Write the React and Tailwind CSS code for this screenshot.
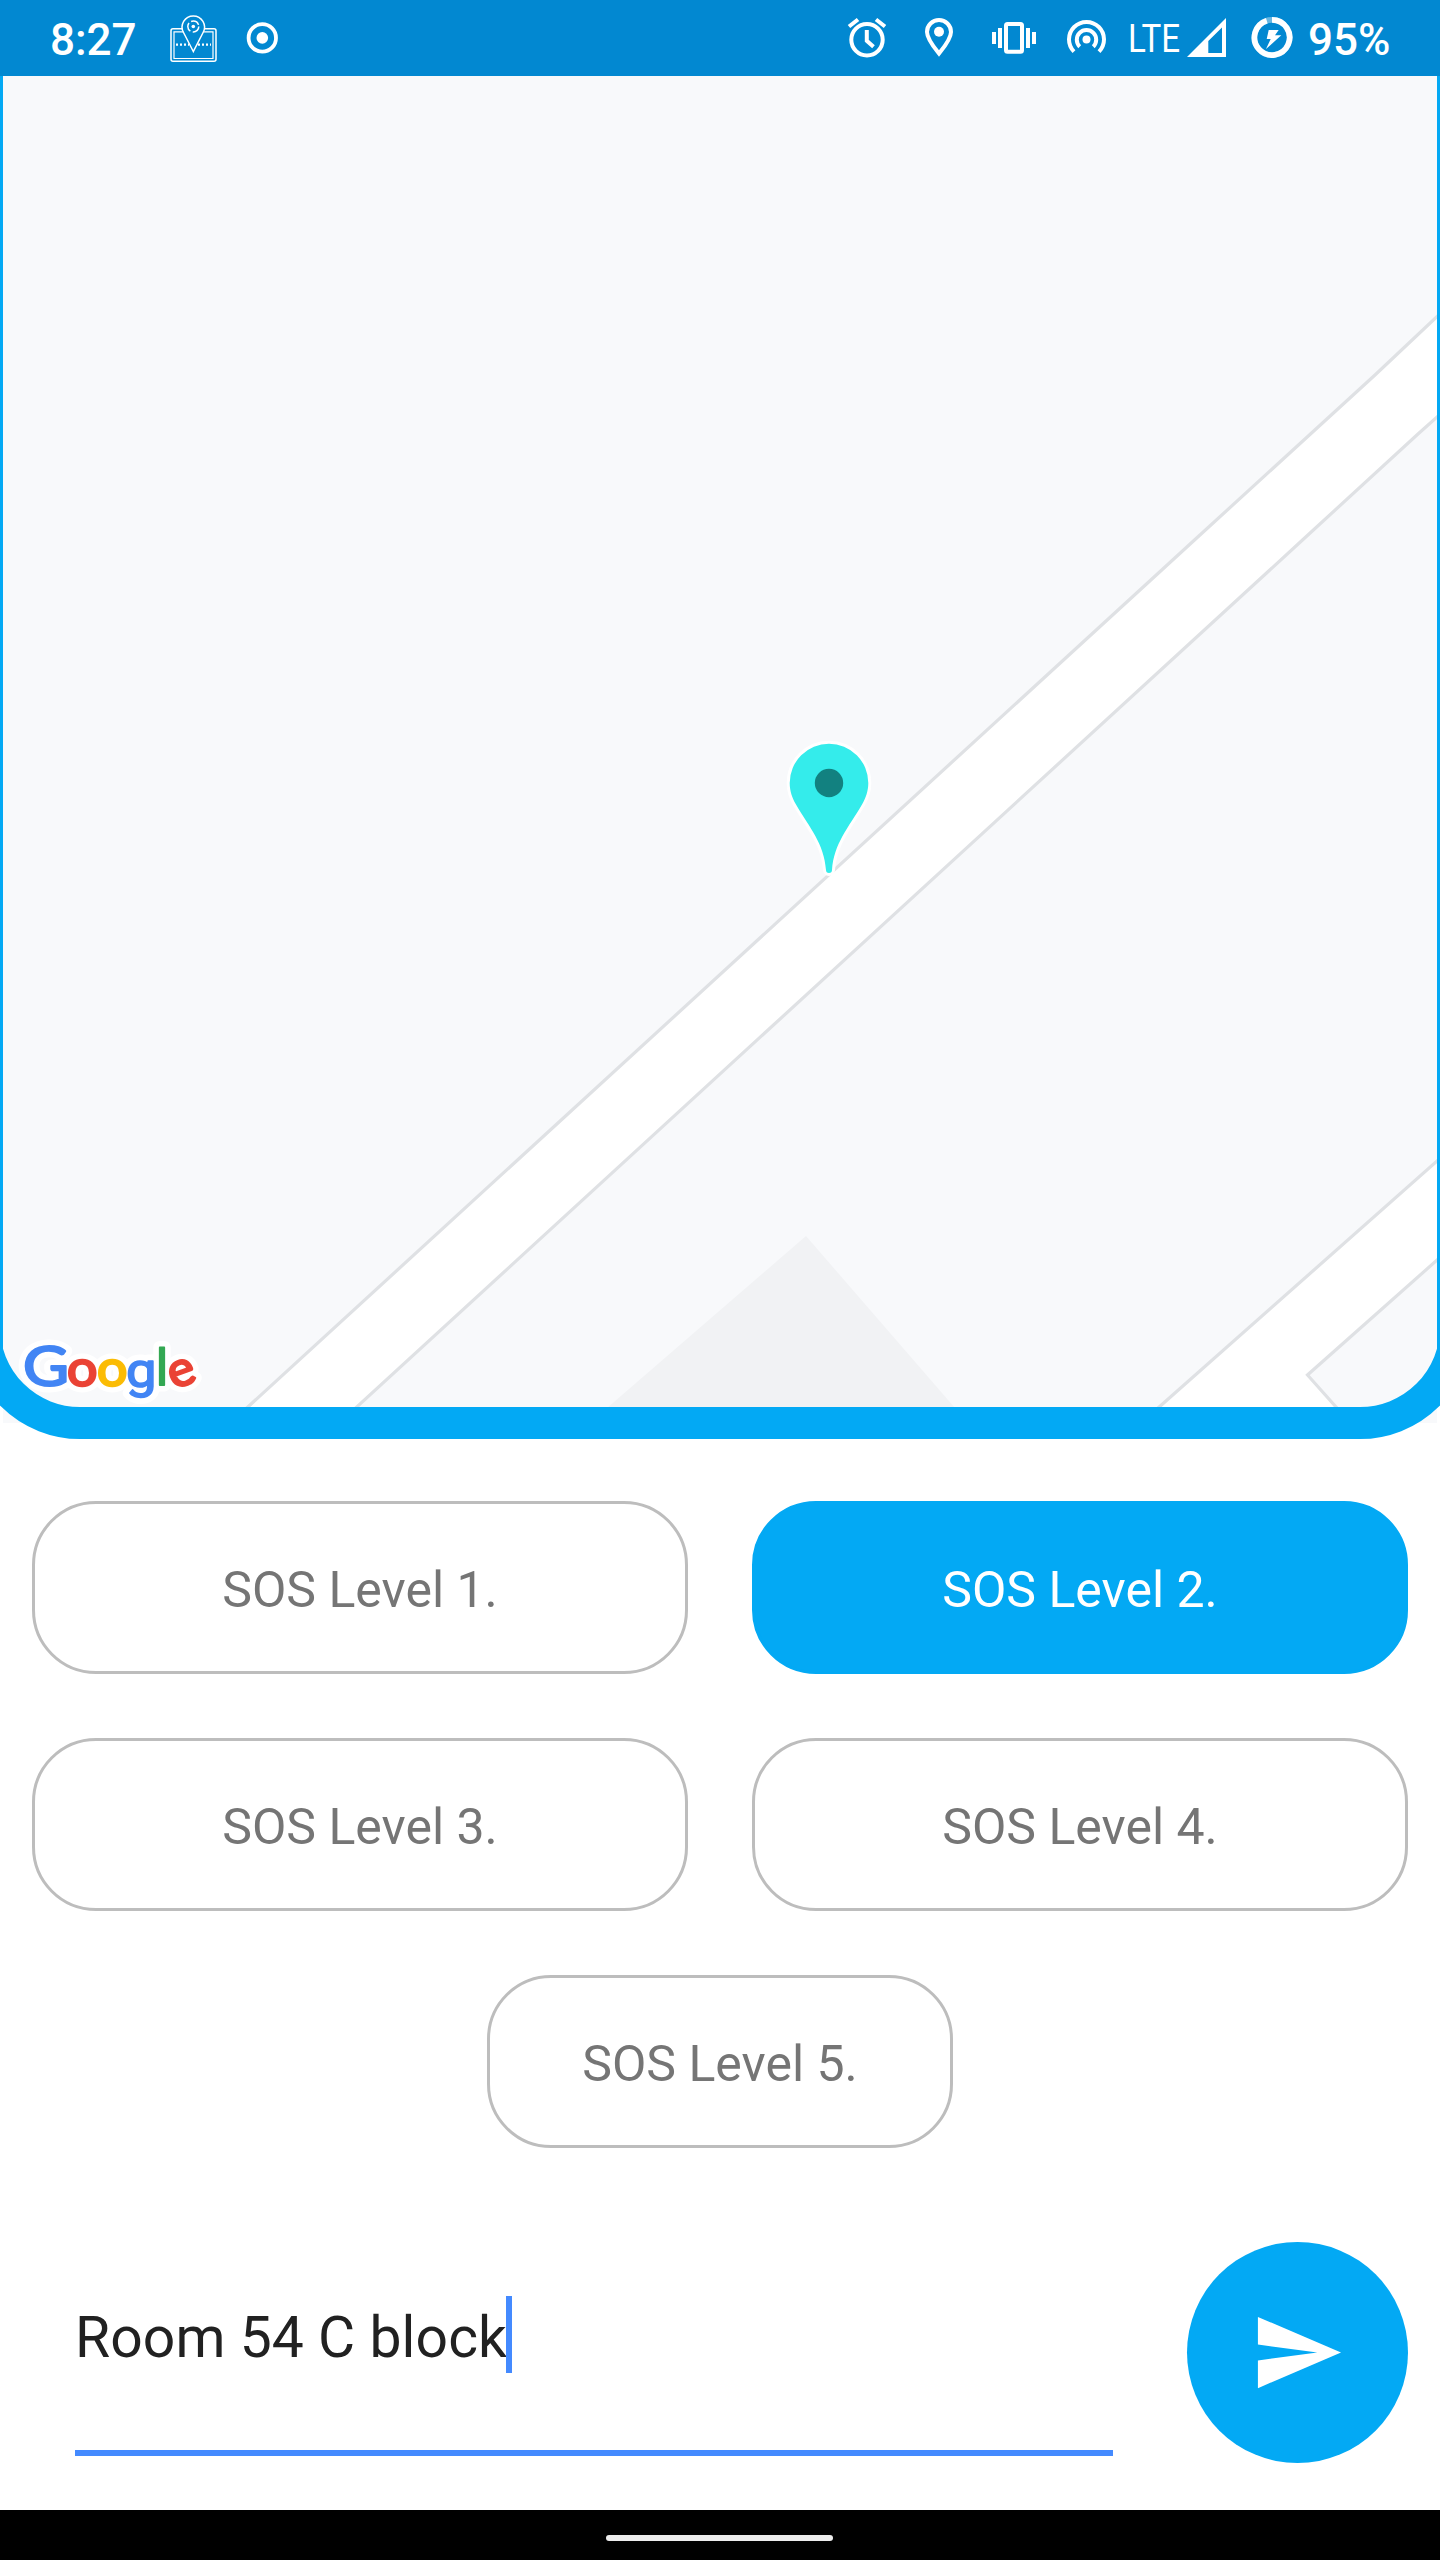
import React from "react";

function MapAppIcon() {
  return (
    <svg className="ml-[31px] h-[50px] w-[50px]" viewBox="168 13 50 50" fill="none" stroke="#fff" strokeWidth="1.5">
      <path d="M182.5 28.7h-9.5a2 2 0 0 0-2 2v28.5a2 2 0 0 0 2 2h41a2 2 0 0 0 2-2V30.700a2 2 0 0 0-2-2h-9.500" />
      <path d="M183.500 31.800h-9.500v26.700h39V31.800h-9.500" strokeWidth="1.200" />
      <path d="M193.300 51.500 183.500 32.500a11.200 11.200 0 1 1 19.600 0Z" />
      <circle cx="193.300" cy="26.500" r="5.500" strokeDasharray="9 2.500" />
      <circle cx="193.300" cy="26.500" r="1.800" fill="#fff" stroke="none" />
      <path d="M176 44.700h13M198 44.700h13" strokeWidth="2.200" strokeDasharray="2 2" />
    </svg>
  );
}

function RecordIcon() {
  return (
    <svg className="ml-[27px] h-[34px] w-[34px]" viewBox="245 21.500 34 34" fill="none">
      <circle cx="262.300" cy="38.400" r="13.700" stroke="#fff" strokeWidth="3.800" />
      <circle cx="262.300" cy="38.400" r="5.800" fill="#fff" />
    </svg>
  );
}

function StatusIcons() {
  return (
    <>
      <svg className="h-[44px] w-[42px]" viewBox="846 16 42 44" fill="none" stroke="#fff" strokeWidth="4">
        <circle cx="867" cy="39.700" r="15.700" />
        <path d="M849 26.500 858 19.500M885 26.500 876 19.500M866.800 30v10.800l6.700 5.900" />
      </svg>
      <svg className="ml-[34px] h-[44px] w-[34px]" viewBox="922 16 34 44" fill="none">
        <path d="M939 53.600C934.500 48 927 39 927 32a12 12 0 0 1 24 0c0 7-7.500 16-12 21.600Z" stroke="#fff" strokeWidth="4" />
        <circle cx="939" cy="31.700" r="5" fill="#fff" />
      </svg>
      <svg className="ml-[34px] h-[44px] w-[48px]" viewBox="990 16 48 44" fill="none">
        <rect x="1006" y="24" width="16" height="27.700" rx="1.500" stroke="#fff" strokeWidth="4" />
        <path d="M992 32h4v12h-4zM998 28h4v20h-4zM1026 28h4v20h-4zM1032 32h4v12h-4z" fill="#fff" />
      </svg>
      <svg className="ml-[26px] h-[44px] w-[44px]" viewBox="1064 16 44 44" fill="none" stroke="#fff" strokeWidth="4">
        <circle cx="1086.500" cy="39.500" r="4" fill="#fff" stroke="none" />
        <path d="M1079.700 46.700a9.700 9.700 0 1 1 13.600 0" />
        <path d="M1074 51.700a17.500 17.500 0 1 1 25 0" />
      </svg>
    </>
  );
}

function SignalIcon() {
  return (
    <svg className="h-[44px] w-[40px]" viewBox="1187 16 40 44">
      <path fillRule="evenodd" fill="#fff" d="M1187 57h39V18ZM1208.300 53V41L1222 27.500V53Z" />
    </svg>
  );
}

function BatteryIcon() {
  return (
    <svg className="ml-[24px] h-[44px] w-[42px]" viewBox="1251 16 42 44" fill="none">
      <circle cx="1272" cy="37.500" r="17.600" stroke="#fff" strokeOpacity="0.4" strokeWidth="5.700" />
      <path d="M1272 19.900A17.600 17.600 0 1 1 1266.800 20.700" stroke="#fff" strokeWidth="5.700" />
      <path d="M1268.700 30h10l-3.700 5.300h6.300L1266 49l4.700-10h-4Z" fill="#fff" />
    </svg>
  );
}

function StatusBar() {
  return (
    <header className="flex h-[76px] items-center bg-[#0288d1] text-[44px] leading-none font-medium text-white">
      <span className="ml-[50px] w-[87px] pt-[4px] whitespace-nowrap">8:27</span>
      <MapAppIcon />
      <RecordIcon />
      <div className="ml-auto flex items-center">
        <StatusIcons />
        <span className="ml-[20px] w-[59px] origin-left scale-x-[0.85] pt-[3px] text-[39px] font-normal">LTE</span>
        <SignalIcon />
        <BatteryIcon />
        <span className="ml-[15px] w-[132px] pt-[4px]">95%</span>
      </div>
    </header>
  );
}

const logoLetters = [
  { c: "G", x: 23, y: 1385.5, size: 56, w: 46, bold: 2.2, fill: "#4285f4" },
  { c: "o", x: 67, y: 1385.5, size: 50, w: 30.5, bold: 2.4, fill: "#ea4335" },
  { c: "o", x: 97, y: 1385.5, size: 50, w: 30.5, bold: 2.4, fill: "#fbbc05" },
  { c: "g", x: 126, y: 1386.5, size: 49, w: 30.5, bold: 1.6, fill: "#4285f4" },
  { c: "l", x: 156, y: 1384.5, size: 50, w: 12, bold: 1.8, fill: "#34a853" },
  { c: "e", x: 168, y: 1385.5, size: 49, w: 26.5, bold: 2.4, fill: "#ea4335" },
];

function GoogleMark({ outline }) {
  return logoLetters.map((l, i) => (
    <text
      key={i}
      x={l.x}
      y={l.y}
      fontSize={l.size}
      textLength={l.w}
      lengthAdjust="spacingAndGlyphs"
      fill={outline ? "#fff" : l.fill}
      stroke={outline ? "#fff" : l.fill}
      strokeWidth={outline ? 13 : l.bold}
      strokeLinejoin="round"
      transform={l.c === "e" ? "rotate(-20 182 1372)" : undefined}
      fontFamily={l.c === "g" || l.c === "l" ? "Roboto, sans-serif" : "Lato, sans-serif"}
      fontWeight="400"
    >
      {l.c}
    </text>
  ));
}

function MapView() {
  return (
    <section className="relative h-[1363px] overflow-hidden bg-white">
      <svg className="block h-[1363px] w-[1440px]" viewBox="0 76 1440 1363">
        <rect x="3" y="76" width="1434" height="1347" fill="#f8f9fb" />
        <path d="M806 1236 607 1408H955Z" fill="#f1f2f4" />
        <g fill="#fff" stroke="#dfe1e4" strokeWidth="3.200">
          <path d="M238 1416 1194.500 540 1375 375 1445 309V410L1418 434 1302.500 540 347 1416Z" />
          <path d="M1149 1416 1445 1154V1253L1307.500 1375 1344 1416Z" />
        </g>
        <path
          d="M789.700 783a39.300 39.300 0 0 1 78.600 0c0 8-2.500 15-6 21-14 24-28.500 39.500-30.300 66a3 3 0 0 1-6 0c-1.800-26.500-16.300-42-30.300-66-3.500-6-6-13-6-21Z"
          fill="#34eceb"
          stroke="#fff"
          strokeWidth="6"
          paintOrder="stroke"
        />
        <circle cx="829" cy="783" r="14.200" fill="#128180" />
        <GoogleMark outline />
        <GoogleMark />
      </svg>
      <div className="absolute inset-x-0 top-0 bottom-10 border-x-3 border-[#03a9f4]" />
      <div className="absolute -inset-x-8 -top-32 bottom-0 rounded-b-[112px] border-32 border-[#03a9f4]" />
    </section>
  );
}

function LevelButton({ level, active }) {
  return (
    <button
      className={
        "flex h-[173px] items-center justify-center rounded-[64px] border-3 pt-[5px] text-[50px] " +
        (active ? "border-[#03a9f4] bg-[#03a9f4] text-white" : "border-[#bdbdbd] bg-white text-[#757575]")
      }
    >
      SOS Level {level}.
    </button>
  );
}

export default function App() {
  return (
    <div className="flex h-[2560px] w-[1440px] flex-col overflow-hidden bg-white font-['Roboto',sans-serif]">
      <StatusBar />
      <MapView />
      <main className="flex flex-1 flex-col">
        <div className="mt-[62px] grid grid-cols-2 gap-16 px-8">
          <LevelButton level={1} />
          <LevelButton level={2} active />
          <LevelButton level={3} />
          <LevelButton level={4} />
        </div>
        <div className="mx-auto mt-16 grid w-[466px]">
          <LevelButton level={5} />
        </div>
        <div className="mt-[94px] flex items-start justify-between pr-8 pl-[75px]">
          <div className="flex h-[214px] w-[1038px] flex-col justify-between border-b-[6px] border-[#448aff] pt-[54px]">
            <div className="flex h-[77px] items-center">
              <span className="w-[431px] pt-[5px] text-[57px] leading-none tracking-[0.08px] whitespace-nowrap text-[#212121]">Room 54 C block</span>
              <span className="h-[77px] w-[6px] bg-[#448aff]" />
            </div>
          </div>
          <button className="flex size-[221px] items-center justify-center rounded-full bg-[#03a9f4]">
            <svg className="size-[95px]" viewBox="0 0 24 24" fill="#fff">
              <path d="M2 21 23 12 2 3v7l15 2-15 2Z" />
            </svg>
          </button>
        </div>
      </main>
      <footer className="flex h-[50px] items-center justify-center bg-black pt-[6px]">
        <div className="mr-[1px] h-[6px] w-[227px] rounded-full bg-[#ececec]" />
      </footer>
    </div>
  );
}
